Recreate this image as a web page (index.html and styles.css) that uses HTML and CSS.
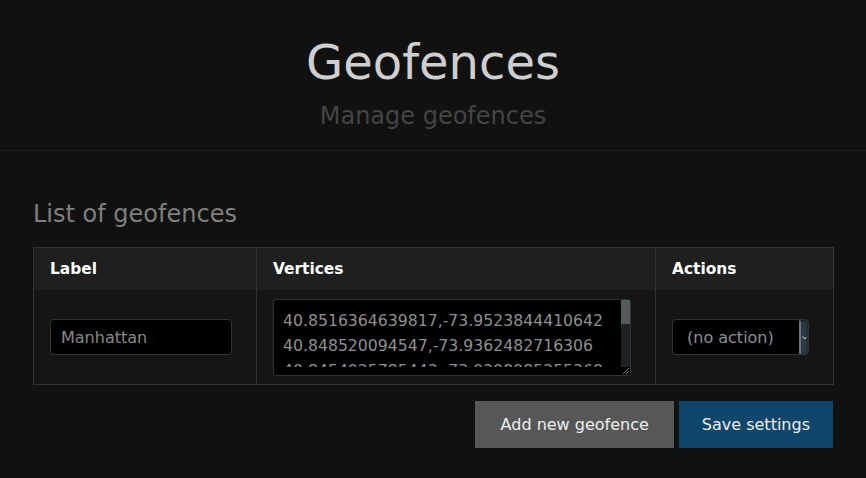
FILE: index.html
```html
<!DOCTYPE html>
<html lang="en">
<head>
<meta charset="utf-8">
<title>Geofences</title>
<link rel="stylesheet" href="styles.css">
</head>
<body>
<header class="page-header">
  <h1 class="page-title">Geofences</h1>
  <p class="page-subtitle">Manage geofences</p>
</header>
<main class="content">
  <h2 class="section-title">List of geofences</h2>
  <table class="fence-table">
    <colgroup>
      <col class="col-label">
      <col class="col-vertices">
      <col class="col-actions">
    </colgroup>
    <thead>
      <tr>
        <th>Label</th>
        <th>Vertices</th>
        <th>Actions</th>
      </tr>
    </thead>
    <tbody>
      <tr>
        <td><input class="field label-field" type="text" value="Manhattan"></td>
        <td>
          <div class="textarea-wrap">
            <textarea class="vertices-field" spellcheck="false">40.8516364639817,-73.9523844410642
40.848520094547,-73.9362482716306
40.8454025785443,-73.9298985255368
40.7954025785443,-73.9201985255368
40.7004025785443,-74.0152985255368</textarea>
            <span class="fake-scrollbar"><span class="fake-thumb"></span></span>
            <span class="resize-grip"></span>
          </div>
        </td>
        <td>
          <div class="select-wrap">
            <select class="field action-field">
              <option>(no action)</option>
              <option>Delete</option>
            </select>
          </div>
        </td>
      </tr>
    </tbody>
  </table>
  <div class="button-row">
    <button class="btn btn-secondary" type="button">Add new geofence</button>
    <button class="btn btn-primary" type="button">Save settings</button>
  </div>
</main>
</body>
</html>
```

FILE: styles.css
```css
html, body {
  margin: 0;
  padding: 0;
  background: #111111;
  font-family: "DejaVu Sans", "Liberation Sans", sans-serif;
  color: #cccccc;
}

.page-header {
  padding: 34px 0 20px;
  border-bottom: 1px solid #222222;
  text-align: center;
}

.page-title {
  margin: 0;
  font-size: 48px;
  line-height: 56px;
  font-weight: normal;
  color: #cfcfcf;
}

.page-subtitle {
  margin: 12px 0 0;
  font-size: 24px;
  line-height: 28px;
  color: #444444;
}

.content {
  width: 800px;
  margin: 0 auto;
  padding-top: 49px;
}

.section-title {
  margin: 0 0 19px;
  font-size: 24px;
  line-height: 28px;
  font-weight: normal;
  color: #7f7f7f;
}

.fence-table {
  width: 800px;
  table-layout: fixed;
  border-collapse: collapse;
  border: 1px solid #333333;
}

.col-label { width: 223px; }
.col-vertices { width: 399px; }
.col-actions { width: 178px; }

.fence-table th,
.fence-table td {
  border-left: 1px solid #333333;
  border-right: 1px solid #333333;
  padding: 0 16px;
  text-align: left;
  vertical-align: middle;
}

.fence-table th {
  height: 42px;
  background: #1f1f1f;
  color: #ffffff;
  font-size: 15.4px;
  font-weight: bold;
}

.fence-table td {
  height: 94px;
  background: #151515;
}

.field {
  box-sizing: border-box;
  background: #000000;
  border: 1px solid #333333;
  border-radius: 4px;
  color: #888888;
  font-family: "DejaVu Sans", "Liberation Sans", sans-serif;
  outline: none;
  box-shadow: inset 0 1px 3px rgba(0, 0, 0, 0.6);
  display: block;
}

.label-field {
  width: 182px;
  height: 36px;
  padding: 0 10px;
  font-size: 16px;
}

.textarea-wrap {
  position: relative;
  box-sizing: border-box;
  width: 358px;
  height: 77px;
  padding-bottom: 8px;
  background: #000000;
  border: 1px solid #333333;
  border-radius: 3px;
}

.vertices-field {
  box-sizing: border-box;
  display: block;
  width: 100%;
  height: 67px;
  margin: 0;
  padding: 8px 18px 0 9px;
  border: none;
  background: transparent;
  color: #8f8f8f;
  font-family: "DejaVu Sans", "Liberation Sans", sans-serif;
  font-size: 15.7px;
  line-height: 25px;
  resize: none;
  overflow: hidden;
  white-space: pre;
  outline: none;
}

.fake-scrollbar {
  position: absolute;
  top: 0;
  right: 0;
  width: 9px;
  height: 67px;
  background: #1c2226;
}

.fake-thumb {
  display: block;
  width: 9px;
  height: 24px;
  background: #535b5f;
}

.resize-grip {
  position: absolute;
  right: 1px;
  bottom: 1px;
  width: 6px;
  height: 6px;
  background: linear-gradient(135deg, transparent 0 45%, #777 45% 55%, transparent 55% 70%, #777 70% 80%, transparent 80%);
}

.select-wrap {
  position: relative;
  width: 137px;
}

.action-field {
  -webkit-appearance: none;
  appearance: none;
  width: 137px;
  height: 36px;
  padding: 0 0 0 14px;
  font-size: 16px;
  color: #8a8f99;
  background: linear-gradient(to left, #2b3a43 0, #2b3a43 7px, #6e767b 7px, #6e767b 9px, #000000 9px);
}

.select-wrap::after {
  content: "";
  position: absolute;
  right: 2px;
  top: 16px;
  width: 4px;
  height: 3px;
  border-bottom: 1px solid #dddddd;
  border-right: 1px solid #dddddd;
  transform: rotate(45deg) scale(0.7);
  pointer-events: none;
}

.button-row {
  display: flex;
  justify-content: flex-end;
  gap: 5px;
  margin-top: 16px;
}

.btn {
  height: 47px;
  border: none;
  border-radius: 0;
  font-family: "DejaVu Sans", "Liberation Sans", sans-serif;
  font-size: 16px;
  color: #eeeeee;
  cursor: pointer;
}

.btn-secondary {
  padding: 0 25px 0 26px;
  background: #575757;
}

.btn-primary {
  padding: 0 23px;
  background: #0f466b;
}
```
